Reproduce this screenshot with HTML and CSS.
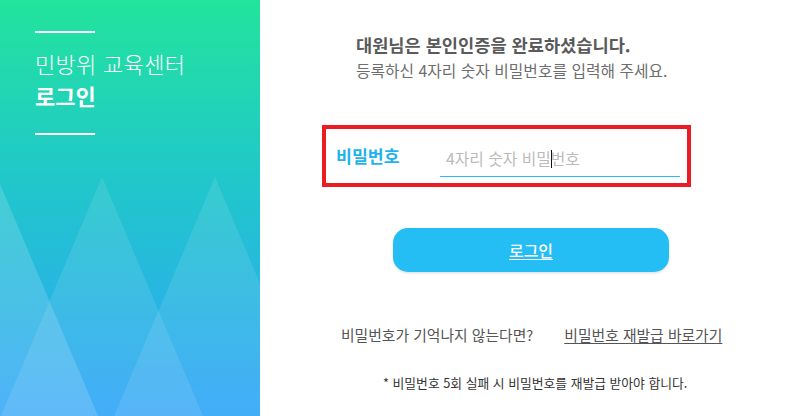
FILE: index.html
```html
<!DOCTYPE html>
<html lang="ko">
<head>
<meta charset="utf-8">
<title>민방위 교육센터 로그인</title>
<link rel="stylesheet" href="styles.css">
</head>
<body>
<div class="page">
  <aside class="side">
    <svg class="side-art" width="260" height="416" viewBox="0 0 260 416" aria-hidden="true">
      <polygon points="-3,177 -104,416 98,416" fill="#ffffff" fill-opacity="0.16"/>
      <polygon points="102,177 1,416 203,416" fill="#ffffff" fill-opacity="0.1"/>
      <polygon points="215,177 114,416 316,416" fill="#ffffff" fill-opacity="0.1"/>
    </svg>
    <div class="side-title">
      <span class="rule"></span>
      <p class="center-name">민방위 교육센터</p>
      <p class="login-word">로그인</p>
      <span class="rule"></span>
    </div>
  </aside>
  <main class="main">
    <div class="intro">
      <p class="intro-head">대원님은 본인인증을 완료하셨습니다.</p>
      <p class="intro-sub">등록하신 4자리 숫자 비밀번호를 입력해 주세요.</p>
    </div>
    <div class="field-box">
      <label class="field-label" for="pw">비밀번호</label>
      <div class="field-input">
        <span class="placeholder">4자리 숫자 비밀<span class="caret"></span>번호</span>
      </div>
    </div>
    <button class="login-btn" type="button"><span>로그인</span></button>
    <div class="help-row">
      <span class="help-q">비밀번호가 기억나지 않는다면?</span>
      <a class="help-link" href="#">비밀번호 재발급 바로가기</a>
    </div>
    <p class="note">* 비밀번호 5회 실패 시 비밀번호를 재발급 받아야 합니다.</p>
  </main>
</div>
</body>
</html>
```
FILE: styles.css
```css
* { box-sizing: border-box; }
html, body { margin: 0; padding: 0; }
body {
  width: 792px;
  height: 416px;
  overflow: hidden;
  background: #ffffff;
  font-family: "Noto Sans CJK KR", "Noto Sans", sans-serif;
}
p { margin: 0; }
.page {
  display: flex;
  width: 792px;
  height: 416px;
}
.side {
  position: relative;
  width: 260px;
  flex: 0 0 260px;
  height: 416px;
  background: linear-gradient(180deg, #22e49c 0%, #21c6cc 45%, #2ea4f8 100%);
  overflow: hidden;
}
.side-art {
  position: absolute;
  left: 0;
  top: 0;
}
.side-title {
  position: relative;
  display: flex;
  flex-direction: column;
  padding: 31px 0 0 35px;
  color: #ffffff;
}
.rule {
  display: block;
  width: 60px;
  height: 2px;
  background: #ffffff;
}
.center-name {
  margin-top: 14px;
  font-size: 22px;
  font-weight: 300;
  line-height: 32px;
  letter-spacing: 0.3px;
}
.login-word {
  font-size: 22px;
  font-weight: 700;
  line-height: 32px;
  margin-bottom: 22px;
}
.main {
  flex: 1;
  display: flex;
  flex-direction: column;
  padding-top: 32px;
}
.intro {
  margin-left: 96px;
}
.intro-head {
  font-size: 17.6px;
  font-weight: 700;
  color: #5a5a5a;
  line-height: 26px;
}
.intro-sub {
  font-size: 15.8px;
  color: #6e6e6e;
  line-height: 24px;
  margin-top: 1px;
}
.field-box {
  margin-top: 42px;
  margin-left: 62px;
  width: 369px;
  height: 62px;
  border: 4px solid #ec1c24;
  display: flex;
  align-items: flex-start;
  padding: 14px 0 0 10px;
}
.field-label {
  font-size: 17.3px;
  font-weight: 700;
  color: #1fb3ec;
  line-height: 26px;
  width: 104px;
}
.field-input {
  width: 240px;
  height: 34px;
  border-bottom: 1px solid #27bdf2;
  padding-left: 6px;
  padding-top: 3px;
}
.placeholder {
  font-size: 15.8px;
  color: #bbbbbb;
  line-height: 24px;
  position: relative;
}
.caret {
  display: inline-block;
  width: 1px;
  height: 18px;
  background: #111111;
  vertical-align: -3px;
  margin: 0 -1px 0 0;
}
.login-btn {
  margin-top: 41px;
  margin-left: 133px;
  width: 276px;
  height: 44px;
  border: 0;
  border-radius: 15px;
  background: #24bef5;
  box-shadow: 0 1px 3px rgba(0, 0, 0, 0.15);
  color: #ffffff;
  font-family: inherit;
  font-size: 16px;
  font-weight: 500;
  padding: 0;
}
.login-btn span {
  text-decoration: underline;
  text-underline-offset: 2px;
}
.help-row {
  margin-top: 52px;
  margin-left: 81px;
  display: flex;
  gap: 31px;
  font-size: 14.8px;
  line-height: 22px;
  color: #555555;
}
.help-link {
  color: #555555;
  text-decoration: underline;
  text-underline-offset: 2px;
}
.note {
  margin-top: 28px;
  margin-left: 123px;
  font-size: 12.8px;
  line-height: 18px;
  color: #333333;
}
```
